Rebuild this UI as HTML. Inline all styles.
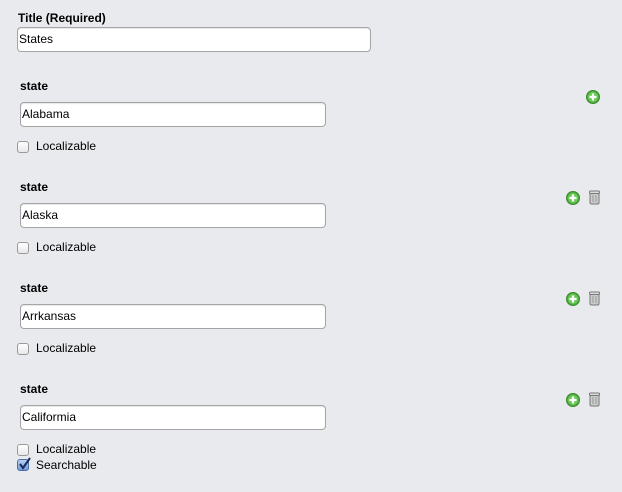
<!DOCTYPE html><html><head><style>
body{margin:0;width:622px;height:492px;background:#e9eaee;font-family:"Liberation Sans",sans-serif;font-size:12px;color:#000;position:relative;overflow:hidden}
.a{position:absolute}
.lb{font-weight:bold;font-size:12px}
.in{position:absolute;background:#fff;border:1px solid #a5a5a5;border-radius:4px;box-sizing:border-box;height:25px;line-height:23px;padding-left:1px;font-size:12px;box-shadow:inset 0 1px 1px rgba(0,0,0,.1)}
.cb{position:absolute;width:10px;height:10px;border:1px solid #999;border-radius:3px;background:linear-gradient(#fff,#e8e8e8)}
.ck{position:absolute;width:10px;height:10px;border:1px solid #4a6fa8;border-radius:3px;background:linear-gradient(#b9d2f0,#6e9ad6)}
.t{position:absolute;font-size:12px}
</style></head><body>
<div class="a lb" style="left:18px;top:11px">Title (Required)</div>
<div class="in" style="left:17px;top:27px;width:354px">States</div>

<div class="a lb" style="left:20px;top:79px">state</div>
<div class="in" style="left:20px;top:102px;width:306px">Alabama</div>
<div class="cb" style="left:17px;top:141px"></div><div class="t" style="left:36px;top:139px">Localizable</div>

<div class="a lb" style="left:20px;top:180px">state</div>
<div class="in" style="left:20px;top:203px;width:306px">Alaska</div>
<div class="cb" style="left:17px;top:242px"></div><div class="t" style="left:36px;top:240px">Localizable</div>

<div class="a lb" style="left:20px;top:281px">state</div>
<div class="in" style="left:20px;top:304px;width:306px">Arrkansas</div>
<div class="cb" style="left:17px;top:343px"></div><div class="t" style="left:36px;top:341px">Localizable</div>

<div class="a lb" style="left:20px;top:382px">state</div>
<div class="in" style="left:20px;top:405px;width:306px">Califormia</div>
<div class="cb" style="left:17px;top:444px"></div><div class="t" style="left:36px;top:442px">Localizable</div>
<div class="ck" style="left:17px;top:459px"></div>
<svg class="a" style="left:17px;top:455px" width="16" height="16"><path d="M3 9 L6 13 L13 3" stroke="#1a2a5a" stroke-width="2" fill="none"/></svg>
<div class="t" style="left:36px;top:458px">Searchable</div>

<svg width="0" height="0"><defs>
<g id="p"><circle cx="7" cy="7" r="6.5" fill="#4caf3c" stroke="#3a8a2e"/><circle cx="7" cy="7" r="5" fill="#6cc85a"/><path d="M7 3.5v7M3.5 7h7" stroke="#fff" stroke-width="2.2"/></g>
<g id="tr"><rect x="2" y="2" width="9" height="12" rx="1.5" fill="#ccc" stroke="#777"/><rect x="1.5" y="1" width="10" height="2.5" rx="1" fill="#ddd" stroke="#777"/><path d="M5 5v7M8 5v7" stroke="#999"/></g>
</defs></svg>
<svg class="a" style="left:586px;top:90px" width="14" height="14"><use href="#p"/></svg>
<svg class="a" style="left:566px;top:191px" width="14" height="14"><use href="#p"/></svg>
<svg class="a" style="left:588px;top:190px" width="14" height="16"><use href="#tr"/></svg>
<svg class="a" style="left:566px;top:292px" width="14" height="14"><use href="#p"/></svg>
<svg class="a" style="left:588px;top:291px" width="14" height="16"><use href="#tr"/></svg>
<svg class="a" style="left:566px;top:393px" width="14" height="14"><use href="#p"/></svg>
<svg class="a" style="left:588px;top:392px" width="14" height="16"><use href="#tr"/></svg>
</body></html>
